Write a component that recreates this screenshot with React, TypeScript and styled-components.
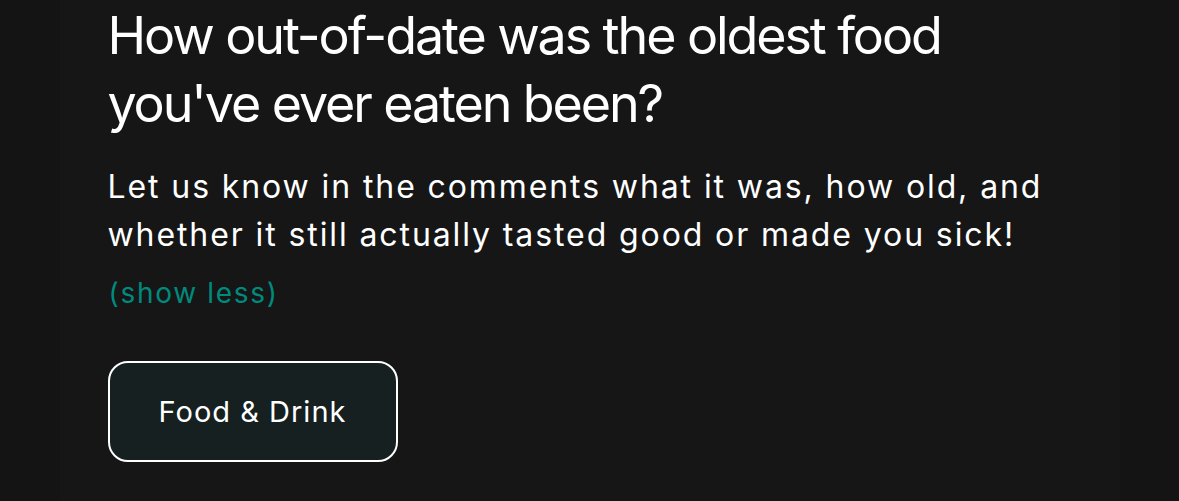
import React from "react";
import styled, { createGlobalStyle } from "styled-components";

const Global = createGlobalStyle`
  html, body { margin: 0; padding: 0; background: #141414; }
  body { font-family: Inter, "Noto Sans", sans-serif; -webkit-font-smoothing: antialiased; }
`;

const Page = styled.div`
  width: 1179px;
  height: 501px;
  overflow: hidden;
  display: flex;
  justify-content: center;
  background: #141414;
`;

const Panel = styled.main`
  width: 1060px;
  background: #161616;
  padding: 0 48px;
  box-sizing: border-box;
  display: flex;
  flex-direction: column;
  align-items: flex-start;
`;

const Title = styled.h1`
  margin: 2px 0 0;
  font-size: 52px;
  font-weight: 400;
  line-height: 68px;
  color: #ffffff;
  letter-spacing: -2.1px;
  max-width: 880px;
`;

const Body = styled.p`
  margin: 25px 0 0;
  font-size: 32px;
  line-height: 48px;
  color: #ffffff;
  letter-spacing: 1.9px;
  max-width: 980px;
`;

const Toggle = styled.button`
  margin: 10px 0 0 1px;
  padding: 0;
  border: none;
  background: none;
  font-family: inherit;
  font-size: 28px;
  line-height: 48px;
  color: #008a7e;
  letter-spacing: 1.7px;
  cursor: pointer;
`;

const Tag = styled.span`
  margin-top: 44px;
  box-sizing: border-box;
  width: 290px;
  height: 101px;
  border: 2.5px solid #ffffff;
  border-radius: 20px;
  background: #162020;
  color: #ffffff;
  font-size: 29px;
  letter-spacing: 1px;
  display: flex;
  align-items: center;
  justify-content: center;
`;

export default function App() {
  return (
    <Page>
      <Global />
      <Panel>
        <Title>How out-of-date was the oldest food you've ever eaten been?</Title>
        <Body>
          Let us know in the comments what it was, how old, and whether it still actually tasted good or made you sick!
        </Body>
        <Toggle>(show less)</Toggle>
        <Tag>Food &amp; Drink</Tag>
      </Panel>
    </Page>
  );
}
